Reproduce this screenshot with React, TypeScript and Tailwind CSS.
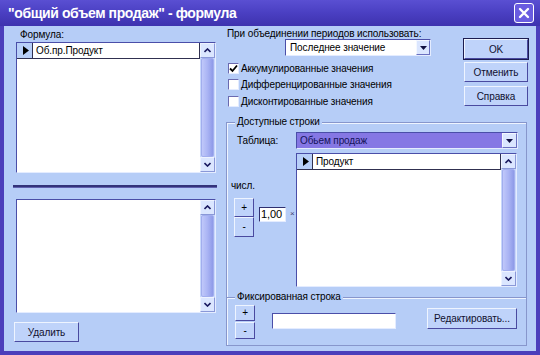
import React from "react";

const Chevron = ({ up }: { up?: boolean }) => (
  <svg width="7" height="5" viewBox="0 0 7 5">
    <path d={up ? "M0.5 4 L3.5 1 L6.5 4" : "M0.5 1 L3.5 4 L6.5 1"} fill="none" stroke="#1a1a60" strokeWidth="1.6" />
  </svg>
);

const DownTri = () => (
  <svg width="7" height="4" viewBox="0 0 7 4">
    <path d="M0 0 L7 0 L3.5 4 Z" fill="#101040" />
  </svg>
);

const RowTri = () => (
  <svg width="6" height="9" viewBox="0 0 6 9">
    <path d="M0 0 L6 4.5 L0 9 Z" fill="#000" />
  </svg>
);

const ScrollBar = () => (
  <div className="w-[15px] h-full flex flex-col bg-[#c9d8fb]">
    <div className="h-[15px] flex items-center justify-center bg-[#dbe6ff] border border-[#eef3ff] border-b-[#8a98d8] border-r-[#8a98d8]">
      <Chevron up />
    </div>
    <div className="flex-1 mx-[1px] rounded-[2px] bg-gradient-to-r from-[#c0c8fa] via-[#aab4f4] to-[#8e9ae8] border border-[#a2aeee]" />
    <div className="h-[15px] flex items-center justify-center bg-[#dbe6ff] border border-[#eef3ff] border-b-[#8a98d8] border-r-[#8a98d8]">
      <Chevron />
    </div>
  </div>
);

const ListBox = ({ w, h, item }: { w: string; h: string; item?: string }) => (
  <div className={`${w} ${h} flex bg-white border border-t-[#4a4ea8] border-l-[#4a4ea8] border-r-[#e4ecff] border-b-[#e4ecff]`}>
    <div className="flex-1 flex flex-col">
      {item && (
        <div className="h-[16px] flex border-b border-[#303050]">
          <div className="w-[16px] h-full flex items-center justify-center bg-[#b8cff8] border-r border-[#303050] pl-[2px]">
            <RowTri />
          </div>
          <div className="flex-1 pl-[3px] leading-[15px] text-black border-r border-[#303050]">{item}</div>
        </div>
      )}
    </div>
    <ScrollBar />
  </div>
);

const Btn = ({ children, cls, def }: { children: React.ReactNode; cls: string; def?: boolean }) => (
  <div className={`${cls} ${def ? "border border-[#1c1c50]" : ""}`}>
    <div className="w-full h-full flex items-center justify-center bg-[#bfd3fa] border border-t-[#eef4ff] border-l-[#eef4ff] border-r-[#4a4aa0] border-b-[#4a4aa0] text-[#101030]">
      {children}
    </div>
  </div>
);

const SmallBtn = ({ label, cls }: { label: string; cls: string }) => (
  <div className={`${cls} flex items-center justify-center bg-[#bfd3fa] border border-t-[#eef4ff] border-l-[#eef4ff] border-r-[#4a4aa0] border-b-[#4a4aa0] text-[10px] leading-none text-black`}>
    {label}
  </div>
);

const Check = ({ checked, label }: { checked?: boolean; label: string }) => (
  <div className="flex items-center h-[16.5px]">
    <div className="w-[11px] h-[11px] bg-white border border-t-[#6a6ab0] border-l-[#6a6ab0] border-r-[#e4ecff] border-b-[#e4ecff] flex items-center justify-center">
      {checked && (
        <svg width="9" height="9" viewBox="0 0 9 9">
          <path d="M1 4.5 L3.5 7 L8 1.5" fill="none" stroke="#000" strokeWidth="1.8" />
        </svg>
      )}
    </div>
    <span className="ml-[2px] text-black">{label}</span>
  </div>
);

export default function App() {
  return (
    <div className="w-[540px] h-[355px] flex flex-col bg-[#4b3ebb] font-['Liberation_Sans',sans-serif] overflow-hidden">
      {/* Title bar */}
      <div className="h-[26px] flex items-center justify-between bg-gradient-to-b from-[#5a4fd2] via-[#4a3fc2] to-[#3e32ae] pl-[8px] pr-[6px]">
        <span className="text-white font-bold text-[14px] tracking-[-0.4px] leading-none">"общий объем продаж" - формула</span>
        <div className="w-[20px] h-[20px] rounded-[3px] bg-[#6a5ce0] border border-white flex items-center justify-center">
          <svg width="12" height="12" viewBox="0 0 12 12">
            <path d="M2 2 L10 10 M10 2 L2 10" stroke="#fff" strokeWidth="2.4" strokeLinecap="round" />
          </svg>
        </div>
      </div>

      {/* Body */}
      <div className="flex-1 mx-[4px] mb-[4px] bg-[#b6cdf7] flex text-[10px] tracking-[-0.1px] text-black">
        {/* Left column */}
        <div className="w-[214px] pl-[9px] pt-[3px] flex flex-col">
          <div className="pl-[7px] h-[13px] leading-[11px]">Формула:</div>
          <div className="ml-[3px]">
            <ListBox w="w-[200px]" h="h-[131px]" item="Об.пр.Продукт" />
          </div>
          <div className="mt-[12px] h-[3px] w-[204px] bg-[#33337a] border-b border-[#6060b0]" />
          <div className="mt-[11px] ml-[3px]">
            <ListBox w="w-[200px]" h="h-[114px]" />
          </div>
          <div className="mt-[9px] ml-[1px]">
            <Btn cls="w-[65px] h-[20px]">Удалить</Btn>
          </div>
        </div>

        {/* Right column */}
        <div className="flex-1 pl-[8px] flex flex-col">
          <div className="h-[96px] pt-[3px] flex">
            <div className="w-[237px] flex flex-col">
              <div className="pl-[1px] h-[10px] leading-[10px]">При объединении периодов использовать:</div>
              <div className="ml-[59px] w-[146px] h-[17px] flex bg-white border border-t-[#4a4ea8] border-l-[#4a4ea8] border-r-[#e4ecff] border-b-[#e4ecff]">
                <div className="flex-1 pl-[4px] leading-[15px]">Последнее значение</div>
                <div className="w-[14px] h-full flex items-center justify-center bg-[#dbe6ff] border border-t-[#f4f8ff] border-l-[#f4f8ff] border-r-[#6a70c0] border-b-[#6a70c0]">
                  <DownTri />
                </div>
              </div>
              <div className="mt-[4px] pl-[2px] flex flex-col">
                <Check checked label="Аккумулированные значения" />
                <Check label="Дифференцированные значения" />
                <Check label="Дисконтированные значения" />
              </div>
            </div>
            <div className="pt-[9px] flex flex-col">
              <Btn def cls="w-[66px] h-[22px]">OK</Btn>
              <div className="mt-[2px] ml-[1px]"><Btn cls="w-[64px] h-[20px]">Отменить</Btn></div>
              <div className="mt-[4px] ml-[1px]"><Btn cls="w-[64px] h-[20px]">Справка</Btn></div>
            </div>
          </div>

          {/* Group frame */}
          <div className="relative w-[301px] h-[224px] border border-[#8796cc] shadow-[inset_1px_1px_0_#eef4ff] flex flex-col">
            <span className="absolute left-[8px] top-[-7px] px-[2px] bg-[#b6cdf7] leading-[12px]">Доступные строки</span>
            <div className="grid grid-cols-[69px_222px] mt-[9px]">
              <div className="pl-[10px] leading-[17px]">Таблица:</div>
              <div className="w-[222px] h-[17px] flex bg-[#8577e4] border border-t-[#4a4ea8] border-l-[#4a4ea8] border-r-[#e4ecff] border-b-[#e4ecff]">
                <div className="flex-1 pl-[3px] leading-[15px] text-[#14145a]">Обьем продаж</div>
                <div className="w-[15px] h-full flex items-center justify-center bg-[#dbe6ff] border border-t-[#f4f8ff] border-l-[#f4f8ff] border-r-[#6a70c0] border-b-[#6a70c0]">
                  <DownTri />
                </div>
              </div>
              <div className="pt-[31px] pl-[4px] flex flex-col">
                <div className="leading-[11px]">числ.</div>
                <div className="mt-[7px] ml-[3px] flex items-start">
                  <div className="flex flex-col">
                    <SmallBtn label="+" cls="w-[20px] h-[19px]" />
                    <SmallBtn label="-" cls="w-[20px] h-[20px]" />
                  </div>
                  <div className="ml-[5px] mt-[9px] w-[27px] h-[15px] bg-white border border-t-[#303070] border-l-[#303070] border-r-[#e4ecff] border-b-[#e4ecff] leading-[13px] pl-[1px] text-[11px]">1,00</div>
                  <span className="ml-[4px] mt-[12px] text-[8px] leading-none text-[#404070]">×</span>
                </div>
              </div>
              <div className="mt-[4px]">
                <ListBox w="w-[221px]" h="h-[134px]" item="Продукт" />
              </div>
            </div>

            <div className="relative mt-[10px] border-t border-[#8796cc] shadow-[inset_0_1px_0_#eef4ff] flex-1 flex items-start">
              <span className="absolute left-[8px] top-[-7px] px-[2px] bg-[#b6cdf7] leading-[12px]">Фиксированная строка</span>
              <div className="ml-[8px] mt-[7px] flex flex-col">
                <SmallBtn label="+" cls="w-[20px] h-[16px]" />
                <div className="h-[1px]" />
                <SmallBtn label="-" cls="w-[20px] h-[17px]" />
              </div>
              <div className="ml-[17px] mt-[15px] w-[124px] h-[16px] bg-white border border-t-[#4a4ea8] border-l-[#4a4ea8] border-r-[#e4ecff] border-b-[#e4ecff]" />
              <div className="ml-[31px] mt-[10px]">
                <Btn cls="w-[90px] h-[21px]">Редактировать...</Btn>
              </div>
            </div>
          </div>
        </div>
      </div>
    </div>
  );
}
